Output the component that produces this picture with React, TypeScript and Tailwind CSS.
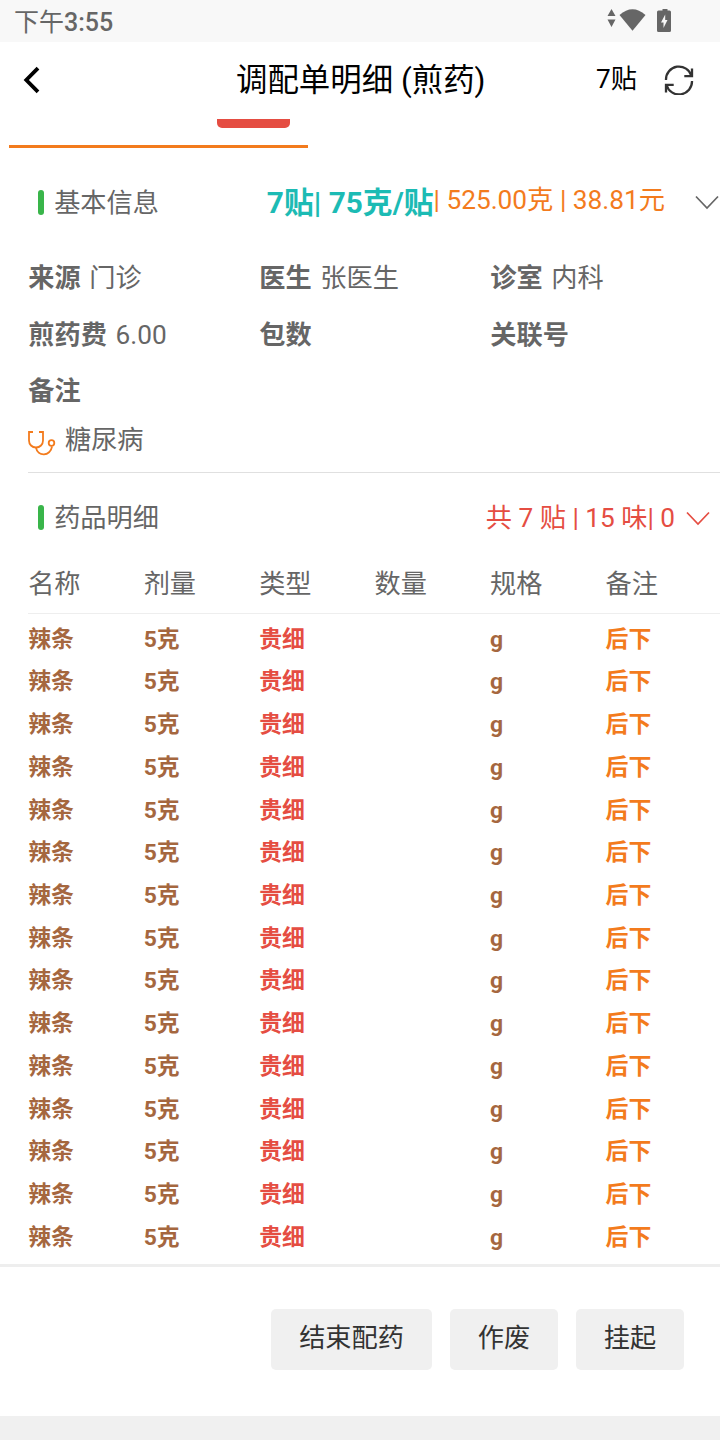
import type { ReactNode } from 'react';

const medicines = Array.from({ length: 15 }, () => ({
  name: '辣条',
  dose: '5克',
  kind: '贵细',
  amount: '',
  unit: 'g',
  note: '后下',
}));

function StatusBar() {
  return (
    <div className="flex h-[42px] shrink-0 items-center justify-between bg-[#f8f8f8] pl-[14px] pr-[48px] text-[#666]">
      <span className="pt-[4px] text-[25px] leading-[42px]">
        下午<span className="font-medium">3:55</span>
      </span>
      <svg width="65" height="42" viewBox="0 0 65 42" fill="#666">
        <path d="M4.500 9L8.500 16H0.500ZM0.500 19.500H8.500L4.500 27Z" />
        <path d="M12.500 15Q25.500 3.500 38.500 15L25.500 30.700Z" />
        <path d="M53 10.500H55.500V9H60.500V10.500H62.500Q64 10.500 64 12V30.500Q64 32 62.500 32H51.500Q50 32 50 30.500V12Q50 10.500 51.500 10.500Z" />
        <path d="M58.200 14.500L54 22.500H56.500V28L60.500 20H58.200Z" fill="#f8f8f8" />
      </svg>
    </div>
  );
}

function Header() {
  return (
    <header className="grid h-[77px] shrink-0 grid-cols-[236px_1fr_124px] items-center text-black">
      <svg className="mb-[1px] ml-5" width="24" height="30" viewBox="0 0 24 30" fill="none" stroke="#000" strokeWidth="3.8">
        <path d="M18 3.200L6.300 15L18 26.800" />
      </svg>
      <h1 className="whitespace-nowrap text-[31.450px] leading-[76px]">调配单明细 (煎药)</h1>
      <div className="flex items-center">
        <span className="w-[68px] whitespace-nowrap pb-[3px] text-[26.200px] leading-[72px]">7贴</span>
        <svg className="mb-[1px]" width="30" height="30" viewBox="0 0 30 30" fill="none" stroke="#333" strokeWidth="2.3">
          <path d="M2 15A13 13 0 0 1 27.500 11M28 16A13 13 0 0 1 2.500 20" />
          <path d="M28 3.500V11.200H20.300M2 27.500V19.800H9.700" />
        </svg>
      </div>
    </header>
  );
}

function Chevron() {
  return (
    <svg className="shrink-0" width="24" height="16" viewBox="0 0 24 16" fill="none" stroke="currentColor" strokeWidth="1.700">
      <path d="M1 2.500L12 14L23 2.500" />
    </svg>
  );
}

function SectionTitle({ children }: { children: ReactNode }) {
  return (
    <div className="flex items-center pl-[38px]">
      <span className="h-[25px] w-[6px] rounded-[3px] bg-[#39b54a]" />
      <h2 className="ml-[10.200px] pt-px text-[26.200px]">{children}</h2>
    </div>
  );
}

function Field({ label, value }: { label: string; value?: string }) {
  return (
    <div className="whitespace-nowrap text-[26.200px]">
      <span className="font-bold">{label}</span>
      {value && <span className="ml-[8.700px]">{value}</span>}
    </div>
  );
}

function Action({ children }: { children: ReactNode }) {
  return <button className="h-[61px] rounded-[5px] bg-[#f0f0f0] px-[27.800px] pb-[4px] text-[26.200px] leading-[40px] text-[#333] first:w-[161px]">{children}</button>;
}

export default function App() {
  return (
    <div className="flex h-[1440px] w-[720px] flex-col overflow-hidden bg-white font-['Roboto','Noto_Sans_CJK_SC',sans-serif] text-[#666]">
      <StatusBar />
      <Header />
      <div className="ml-[217px] h-[9px] w-[73px] shrink-0 rounded-b-[5px] bg-[#e54d42]" />
      <div className="ml-[9px] mt-[17px] h-[3px] w-[299px] shrink-0 bg-[#f37b1d]" />

      <section className="shrink-0">
        <div className="mt-[24px] flex h-[60px] items-center justify-between leading-[60px]">
          <SectionTitle>基本信息</SectionTitle>
          <div className="flex items-center whitespace-nowrap">
            <span className="pt-px text-[29.800px] font-bold text-[#1cbbb4]">7贴| 75克/贴</span>
            <span className="mb-1 text-[26.250px] text-[#f37b1d]">| 525.00克 | 38.81元</span>
            <span className="ml-[30px] mr-[1px]">
              <Chevron />
            </span>
          </div>
        </div>
        <div className="mt-[18px] grid grid-cols-[231px_231px_1fr] pl-[28.300px] leading-[56.500px]">
          <Field label="来源" value="门诊" />
          <Field label="医生" value="张医生" />
          <Field label="诊室" value="内科" />
          <Field label="煎药费" value="6.00" />
          <Field label="包数" />
          <Field label="关联号" />
          <Field label="备注" />
        </div>
        <div className="ml-[28px] flex h-[53px] border-b border-[#e0e0e0] text-[26.200px] leading-[41px]">
          <svg className="mt-[9px]" width="28" height="28" viewBox="0 0 28 28" fill="none" stroke="#f37b1d" strokeWidth="1.800">
            <path d="M5 3H1V11.500C1 15.500 4 18.500 8 18.500S15 15.500 15 11.500V3H11" />
            <path d="M8 18.500C9.500 28 22.500 27.500 24 17.500" />
            <circle cx="23.500" cy="14" r="2.800" />
          </svg>
          <span className="ml-[9px]">糖尿病</span>
        </div>
      </section>

      <section className="shrink-0">
        <div className="mt-[15px] flex h-[60px] items-center justify-between leading-[60px]">
          <SectionTitle>药品明细</SectionTitle>
          <div className="flex items-center pr-[10px] text-[26.200px] text-[#e54d42]">
            <span className="mr-[11px] whitespace-nowrap">共 7 贴 | 15 味| 0</span>
            <Chevron />
          </div>
        </div>
        <div className="ml-[28px] h-[66px] border-b border-[#eee]">
          <div className="-mr-[1px] grid grid-cols-6 pl-[0.200px] text-[26.200px] leading-[72px]">
            {['名称', '剂量', '类型', '数量', '规格', '备注'].map((t) => (
              <span key={t}>{t}</span>
            ))}
          </div>
        </div>
        <div className="-mr-[1px] ml-[28.200px] pt-[5.200px] text-[22.900px] font-bold text-[#a5673f]">
          {medicines.map((m, i) => (
            <div key={i} className="grid h-[42.720px] grid-cols-6 leading-[42.720px]">
              <span>{m.name}</span>
              <span>{m.dose}</span>
              <span className="text-[#e54d42]">{m.kind}</span>
              <span>{m.amount}</span>
              <span>{m.unit}</span>
              <span className="text-[#f37b1d]">{m.note}</span>
            </div>
          ))}
        </div>
      </section>

      <footer className="mt-auto flex h-[176px] shrink-0 items-start justify-end gap-[18px] border-b-[24px] border-t-[3px] border-b-[#f0f0f0] border-t-[#eee] pr-[36px] pt-[42px]">
        <Action>结束配药</Action>
        <Action>作废</Action>
        <Action>挂起</Action>
      </footer>
    </div>
  );
}
